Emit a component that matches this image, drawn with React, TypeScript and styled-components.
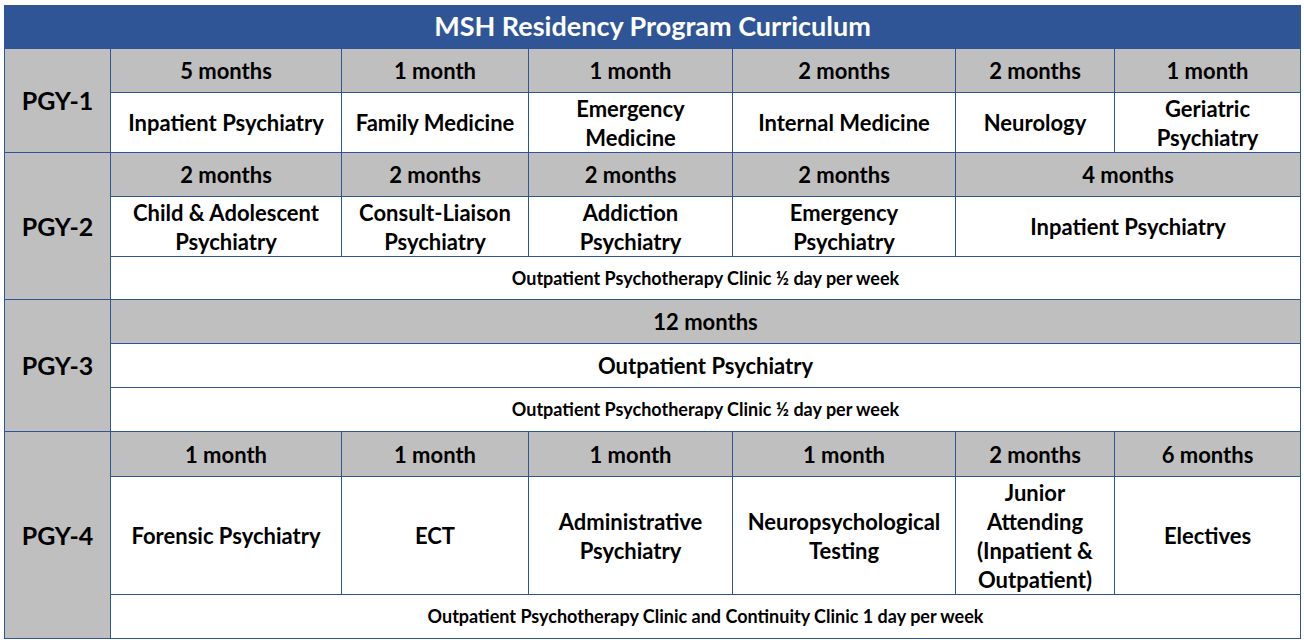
import styled, { createGlobalStyle } from 'styled-components'

const GlobalStyle = createGlobalStyle`
  html, body {
    margin: 0;
    padding: 0;
    background: #ffffff;
  }
  body {
    font-family: Lato, 'Liberation Sans', sans-serif;
  }
`

const BLUE = '#2f5597'
const GREY = '#bfbfbf'

const Page = styled.div`
  padding: 5px 4px 0 4px;
`

const Table = styled.table`
  width: 1296px;
  border-collapse: collapse;
  table-layout: fixed;
  font-weight: 700;
  color: #000;

  td {
    border: 1px solid ${BLUE};
    text-align: center;
    vertical-align: middle;
    padding: 0 2px;
    line-height: 29px;
    white-space: nowrap;
  }
`

const Title = styled.td`
  background: ${BLUE};
  color: #fff;
  font-size: 27px;
  height: 39px;
  && {
    padding-bottom: 3px;
  }
`

const Label = styled.td`
  background: ${GREY};
  font-size: 25px;
`

const Duration = styled.td`
  background: ${GREY};
  font-size: 22px;
`

const Rotation = styled.td`
  background: #fff;
  font-size: 22px;
`

const Note = styled.td`
  background: #fff;
  font-size: 18px;
`

const Line = styled.span`
  display: block;
`

const Row = styled.tr<{ $h: number }>`
  height: ${(p) => p.$h}px;
`

type Block = { months: string; name: string[]; span?: number }

const pgy1: Block[] = [
  { months: '5 months', name: ['Inpatient Psychiatry'] },
  { months: '1 month', name: ['Family Medicine'] },
  { months: '1 month', name: ['Emergency', 'Medicine'] },
  { months: '2 months', name: ['Internal Medicine'] },
  { months: '2 months', name: ['Neurology'] },
  { months: '1 month', name: ['Geriatric', 'Psychiatry'] },
]

const pgy2: Block[] = [
  { months: '2 months', name: ['Child & Adolescent', 'Psychiatry'] },
  { months: '2 months', name: ['Consult-Liaison', 'Psychiatry'] },
  { months: '2 months', name: ['Addiction', 'Psychiatry'] },
  { months: '2 months', name: ['Emergency', 'Psychiatry'] },
  { months: '4 months', name: ['Inpatient Psychiatry'], span: 2 },
]

const pgy4: Block[] = [
  { months: '1 month', name: ['Forensic Psychiatry'] },
  { months: '1 month', name: ['ECT'] },
  { months: '1 month', name: ['Administrative', 'Psychiatry'] },
  { months: '1 month', name: ['Neuropsychological', 'Testing'] },
  { months: '2 months', name: ['Junior', 'Attending', '(Inpatient &', 'Outpatient)'] },
  { months: '6 months', name: ['Electives'] },
]

const widths = [106, 231, 187, 204, 223, 159, 186]

const Year = ({
  label,
  blocks,
  heights,
  note,
}: {
  label: string
  blocks: Block[]
  heights: number[]
  note?: string
}) => (
  <>
    <Row $h={heights[0]}>
      <Label rowSpan={note ? 3 : 2}>{label}</Label>
      {blocks.map((b, i) => (
        <Duration key={i} colSpan={b.span ?? 1}>
          {b.months}
        </Duration>
      ))}
    </Row>
    <Row $h={heights[1]}>
      {blocks.map((b, i) => (
        <Rotation key={i} colSpan={b.span ?? 1}>
          {b.name.map((l, j) => (
            <Line key={j}>{l}</Line>
          ))}
        </Rotation>
      ))}
    </Row>
    {note && (
      <Row $h={heights[2]}>
        <Note colSpan={6}>{note}</Note>
      </Row>
    )}
  </>
)

export default function App() {
  return (
    <Page>
      <GlobalStyle />
      <Table>
        <colgroup>
          {widths.map((w, i) => (
            <col key={i} style={{ width: w }} />
          ))}
        </colgroup>
        <tbody>
          <tr>
            <Title colSpan={7}>MSH Residency Program Curriculum</Title>
          </tr>
          <Year label='PGY-1' blocks={pgy1} heights={[44, 60]} />
          <Year
            label='PGY-2'
            blocks={pgy2}
            heights={[44, 60, 43]}
            note='Outpatient Psychotherapy Clinic ½ day per week'
          />
          <Year
            label='PGY-3'
            blocks={[{ months: '12 months', name: ['Outpatient Psychiatry'], span: 6 }]}
            heights={[44, 44, 44]}
            note='Outpatient Psychotherapy Clinic ½ day per week'
          />
          <Year
            label='PGY-4'
            blocks={pgy4}
            heights={[45, 118, 44]}
            note='Outpatient Psychotherapy Clinic and Continuity Clinic 1 day per week'
          />
        </tbody>
      </Table>
    </Page>
  )
}
